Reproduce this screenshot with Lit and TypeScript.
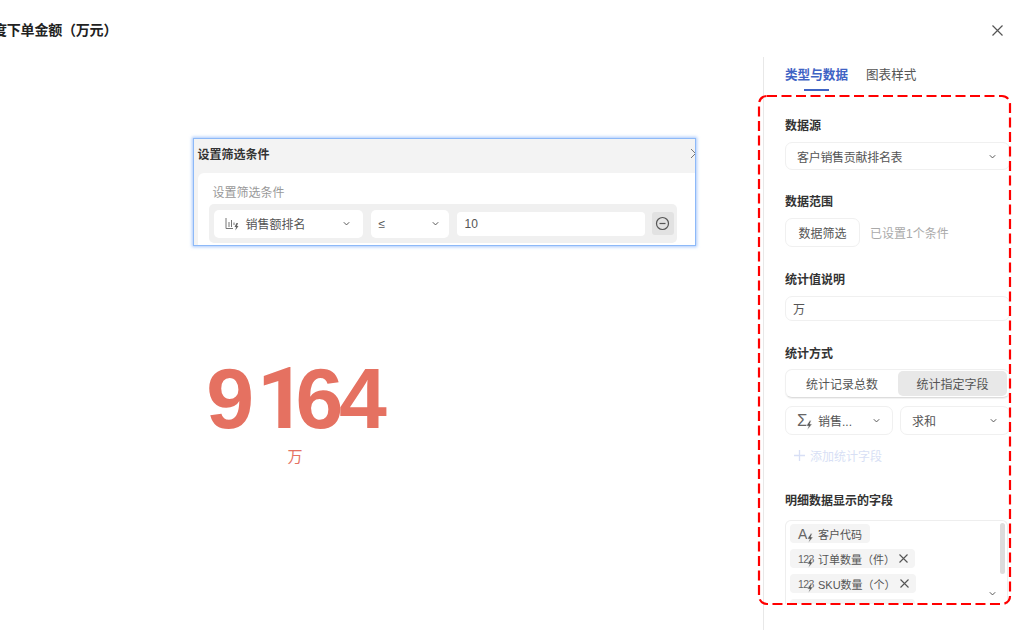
import { LitElement, html, css, svg } from "lit";
import { customElement } from "lit/decorators.js";

const chev = (size = 9) => html`<svg class="chev" width="${size}" height="${size}" viewBox="0 0 10 10"><path d="M2 3.6 L5 6.6 L8 3.6" fill="none" stroke="#555" stroke-width="1.1"/></svg>`;
const bolt = svg`<path d="M6.5 0 L2.5 6 H5 L4 10 L9 4 H6.5 L8 0 Z" fill="#555" stroke="#f4f4f4" stroke-width=".6"/>`;
const boltIcon = html`<svg class="bolt" width="9" height="10" viewBox="0 0 10 10">${bolt}</svg>`;
const closeX = html`<svg class="x" width="11" height="11" viewBox="0 0 11 11"><path d="M1.5 1.5 L9.5 9.5 M9.5 1.5 L1.5 9.5" stroke="#555" stroke-width="1.1" fill="none"/></svg>`;

@customElement("app-root")
export class AppRoot extends LitElement {
  static styles = css`
    :host { display: block; width: 1024px; height: 630px; position: relative; overflow: hidden; background: #fff;
      font-family: "Liberation Sans", "Noto Sans CJK SC", sans-serif; font-size: 12px; color: #333; }
    * { box-sizing: border-box; }
    .top { height: 57px; display: flex; align-items: center; justify-content: space-between; padding: 1px 20px 0 0; }
    .title { font-size: 14px; font-weight: 700; color: #222; margin-left: -7px; white-space: nowrap; letter-spacing: -0.2px; }
    .close { display: block; margin-top: 2px; }
    .body { display: flex; height: 573px; }
    .main { width: 763px; padding: 81px 0 0 193px; flex: none; }
    .card { width: 503px; height: 108px; border: 1.5px solid #8db9f8; box-shadow: 0 0 3px 1px rgba(110,165,248,.6);
      background: #f3f3f3; display: flex; flex-direction: column; overflow: hidden; }
    .card-head { height: 34px; flex: none; display: flex; align-items: center; justify-content: space-between; padding: 0 0 5px 3.5px;
      font-weight: 700; color: #333; }
    .card-head svg { margin-right: -3px; }
    .card-body { flex: 1; background: #fff; margin-left: 3.5px; border-radius: 6px 0 0 0; padding: 12px 0 0 11px; }
    .card-label { color: #999; line-height: 16px; margin-left: 4px; }
    .frow { margin-top: 3px; width: 468px; height: 39px; background: #f0f0f0; border-radius: 5px; display: flex; align-items: center; padding: 0 3px 0 5px; gap: 8px; }
    .fsel { height: 28px; background: #fff; border-radius: 5px; display: flex; align-items: center; color: #555; justify-content: space-between; padding: 0 12px 0 11px; flex: none; }
    .fsel.wide { width: 149px; }
    .fsel.narrow { width: 78px; padding: 0 9px 0 8px; }
    .fname { display: flex; align-items: center; gap: 7px; }
    .finput { width: 188px; height: 24px; background: #fff; border-radius: 4px; padding-left: 8px; display: flex; align-items: center; color: #555; flex: none; }
    .minus { width: 22px; height: 23px; margin-left: -1px; background: #e2e2e2; border-radius: 3px; display: flex; align-items: center; justify-content: center; flex: none; }
    .stat { margin: 102px 0 0 -60px; width: 324px; display: flex; flex-direction: column; align-items: center; }
    .num { font-size: 86px; font-weight: 700; line-height: 100px; color: #e57161; margin-left: 3px; white-space: nowrap; }
    .d9 { letter-spacing: 2.7px; }
    .d1 { letter-spacing: -10.5px; font-family: Roboto, "Liberation Sans", sans-serif; }
    .d6 { letter-spacing: -4.5px; }
    .unit { font-size: 15px; color: #e57161; line-height: 20px; margin-top: -2px; }
    .panel { width: 261px; border-left: 1px solid #e8e8e8; padding: 0 14px 0 21px; flex: none; display: flex; flex-direction: column; height: 573px; overflow: hidden; }
    .tabs { height: 33px; display: flex; gap: 18px; flex: none; }
    .tab { position: relative; font-size: 12.6px; line-height: 36px; color: #555; }
    .tab.on { color: #3f63c4; font-weight: 700; }
    .tab.on::after { content: ""; position: absolute; left: 19px; bottom: -1px; width: 25px; height: 2px; background: #3f63c4; }
    .group { margin-top: 23px; flex: none; }
    .group.first { margin-top: 27px; }
    .group.g3, .group.g4 { margin-top: 24px; }
    .group.g5 { margin-top: 29px; }
    .lbl { font-weight: 700; line-height: 18px; color: #333; margin-bottom: 7px; }
    .lbl.t { margin-bottom: 6px; }
    .lbl.d { margin-bottom: 10px; }
    .sel { height: 28px; border: 1px solid #f0f0f0; border-radius: 7px; display: flex; align-items: center; justify-content: space-between; padding: 0 12px 0 11px; color: #555; }
    .ds { letter-spacing: -.3px; }
    .chev { flex: none; }
    .scope { display: flex; align-items: center; gap: 10px; }
    .btn { width: 75px; height: 29px; border: 1px solid #f0f0f0; border-radius: 7px; display: flex; align-items: center; justify-content: center; color: #555; }
    .hint { color: #aaa; }
    .input { height: 25px; border: 1px solid #f0f0f0; border-radius: 7px; display: flex; align-items: center; padding-left: 7px; color: #555; }
    .seg { height: 29px; border: 1px solid #f0f0f0; border-bottom-color: #ddd; border-radius: 7px; display: flex; align-items: center; padding: 0 2px 0 0; box-shadow: 0 1px 1px rgba(0,0,0,.06); }
    .seg span { display: flex; align-items: center; justify-content: center; height: 25px; color: #555; border-radius: 5px; }
    .seg .l { width: 112px; }
    .seg .r { width: 109px; background: #e8e8e8; }
    .pair { display: flex; gap: 7px; margin-top: 8px; }
    .pair .sel { height: 29px; padding: 0 11px 0 11px; }
    .pair .s1 { width: 108px; }
    .pair .s2 { width: 110px; }
    .sname { display: flex; align-items: center; gap: 7px; }
    .ico { position: relative; width: 14px; height: 16px; display: inline-block; flex: none; color: #666; line-height: 16px; }
    .bolt { position: absolute; right: -2px; bottom: -1px; }
    .sig { font-size: 17px; }
    .add { display: flex; align-items: center; height: 16px; margin: 12px 0 0 8px; gap: 4px; color: #d8dff5; }
    .box { border: 1px solid #eee; border-bottom: none; border-radius: 6px 6px 0 0; height: 84px; position: relative; overflow: hidden; padding: 3px 4px; display: flex; flex-direction: column; gap: 6px; align-items: flex-start; width: 223px; }
    .chip { height: 19px; flex: none; background: #f4f4f4; border-radius: 4px; display: flex; align-items: center; padding: 0 8px 0 8px; gap: 6px; color: #555; font-size: 11px; white-space: nowrap; }
    .chip.cl { padding-right: 6px; }
    .chip .x { margin-left: -3px; }
    .chip.blank { width: 125px; }
    .n123 { font-size: 10.5px; letter-spacing: -.6px; }
    .letter { font-size: 14px; }
    .bar { position: absolute; right: 2px; top: 2px; width: 5px; height: 51px; background: #dcdcdc; border-radius: 3px; }
    .boxchev { position: absolute; right: 10px; top: 66px; }
    .dash { position: absolute; left: 0; top: 0; pointer-events: none; }
  `;

  render() {
    return html`
      <div class="top">
        <div class="title">度下单金额（万元）</div>
        <svg class="close" width="13" height="13" viewBox="0 0 13 13"><path d="M1.5 1.5 L11.5 11.5 M11.5 1.5 L1.5 11.5" stroke="#555" stroke-width="1.2" fill="none"/></svg>
      </div>
      <div class="body">
        <div class="main">
          <div class="card">
            <div class="card-head">设置筛选条件
              <svg width="9" height="11" viewBox="0 0 9 11"><path d="M2 1 L6.5 5.5 L2 10" stroke="#777" fill="none"/></svg>
            </div>
            <div class="card-body">
              <div class="card-label">设置筛选条件</div>
              <div class="frow">
                <div class="fsel wide">
                  <span class="fname">
                    <svg width="14" height="14" viewBox="0 0 14 14"><path d="M1 1 V11.5 H8 M4 5 V10 M6.5 3 V10 M9 5.5 V8" stroke="#777" fill="none"/><path d="M11.5 6 L9.5 10 H11 L10.3 13.5 L13.5 9 H12 L13 6 Z" fill="#666"/></svg>
                    销售额排名</span>${chev()}
                </div>
                <div class="fsel narrow"><span>≤</span>${chev()}</div>
                <div class="finput">10</div>
                <div class="minus">
                  <svg width="15" height="15" viewBox="0 0 15 15"><circle cx="7.5" cy="7.5" r="6" fill="none" stroke="#555" stroke-width="1.2"/><path d="M4.5 7.5 H10.5" stroke="#555" stroke-width="1.2"/></svg>
                </div>
              </div>
            </div>
          </div>
          <div class="stat">
            <div class="num"><span class="d9">9</span><span class="d1">1</span><span class="d6">6</span>4</div>
            <div class="unit">万</div>
          </div>
        </div>
        <div class="panel">
          <div class="tabs">
            <div class="tab on">类型与数据</div>
            <div class="tab">图表样式</div>
          </div>
          <div class="group first">
            <div class="lbl">数据源</div>
            <div class="sel"><span class="ds">客户销售贡献排名表</span>${chev()}</div>
          </div>
          <div class="group">
            <div class="lbl">数据范围</div>
            <div class="scope"><div class="btn">数据筛选</div><span class="hint">已设置1个条件</span></div>
          </div>
          <div class="group g3">
            <div class="lbl">统计值说明</div>
            <div class="input">万</div>
          </div>
          <div class="group g4">
            <div class="lbl t">统计方式</div>
            <div class="seg"><span class="l">统计记录总数</span><span class="r">统计指定字段</span></div>
            <div class="pair">
              <div class="sel s1"><span class="sname"><span class="ico sig">Σ${boltIcon}</span>销售...</span>${chev()}</div>
              <div class="sel s2"><span>求和</span>${chev()}</div>
            </div>
            <div class="add">
              <svg width="13" height="13" viewBox="0 0 13 13"><path d="M6.5 1 V12 M1 6.5 H12" stroke="#d8dff5" stroke-width="1.3"/></svg>
              添加统计字段
            </div>
          </div>
          <div class="group g5">
            <div class="lbl d">明细数据显示的字段</div>
            <div class="box">
              <div class="chip"><span class="ico letter">A${boltIcon}</span>客户代码</div>
              <div class="chip cl"><span class="ico n123">123${boltIcon}</span>订单数量（件）${closeX}</div>
              <div class="chip cl"><span class="ico n123">123${boltIcon}</span>SKU数量（个）${closeX}</div>
              <div class="chip blank"></div>
              <div class="bar"></div>
              <span class="boxchev">${chev()}</span>
            </div>
          </div>
        </div>
      </div>
      <svg class="dash" width="1024" height="630" viewBox="0 0 1024 630">
        <rect x="759" y="96" width="251" height="508" rx="8" fill="none" stroke="#f00" stroke-width="2.2" stroke-dasharray="10 4.5"/>
      </svg>
    `;
  }
}
